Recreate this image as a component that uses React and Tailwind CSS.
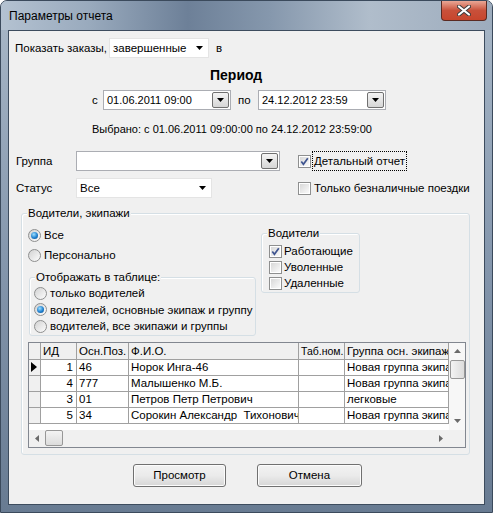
import React from 'react';

const Arrow = () => (
  <svg width="7" height="4" viewBox="0 0 7 4">
    <path d="M0 0h7L3.5 4z" fill="#000" />
  </svg>
);

const DropButton = () => (
  <div className="w-[17px] h-[16px] flex items-center justify-center border border-[#707070] rounded-[2px] bg-gradient-to-b from-[#f4f4f4] to-[#d6d6d6]">
    <Arrow />
  </div>
);

const ListCombo = ({ value, className }) => (
  <div className={`h-[20px] bg-white border border-[#e4e4e4] flex items-center justify-between pl-[3px] pr-[5px] ${className}`}>
    <span>{value}</span>
    <Arrow />
  </div>
);

const EditCombo = ({ value, className }) => (
  <div className={`h-[20px] bg-white border border-[#abadb3] flex items-center justify-between pl-[3px] pr-[1px] text-[11px] ${className}`}>
    <span>{value}</span>
    <DropButton />
  </div>
);

const Check = ({ checked }) => (
  <div className="w-[13px] h-[13px] border border-[#8e8f8f] bg-white p-[1px] shrink-0">
    <div className="w-full h-full bg-gradient-to-br from-[#d8d8d8] to-[#fafafa] flex items-center justify-center">
      {checked && (
        <svg width="9" height="9" viewBox="0 0 9 9">
          <path d="M1.3 4.6L3.4 7.3L7.8 1.2" fill="none" stroke="#3f5590" strokeWidth="1.7" />
        </svg>
      )}
    </div>
  </div>
);

const Radio = ({ checked }) => (
  <div className="w-[13px] h-[13px] rounded-full border border-[#8e8f8f] bg-gradient-to-br from-[#d2d2d2] to-[#fdfdfd] flex items-center justify-center shrink-0">
    {checked && (
      <div className="w-[7px] h-[7px] rounded-full bg-[radial-gradient(circle_at_40%_35%,#9fe0ff,#1f80cf_55%,#0b4a86)]" />
    )}
  </div>
);

const GroupBox = ({ title, className, children }) => (
  <div className={`relative border border-[#d5dfe5] rounded-[3px] shadow-[inset_1px_1px_0_#ffffff] ${className}`}>
    <span className="absolute -top-[8px] left-[5px] px-[1px] bg-[#f0f0f0] leading-[14px]">{title}</span>
    {children}
  </div>
);

const rows = [
  { id: 1, pos: '46', name: 'Норок Инга-46', group: 'Новая группа экипажей', current: true },
  { id: 4, pos: '777', name: 'Малышенко М.Б.', group: 'Новая группа экипажей' },
  { id: 3, pos: '01', name: 'Петров Петр Петрович', group: 'легковые' },
  { id: 5, pos: '34', name: 'Сорокин Александр  Тихонович - 34', group: 'Новая группа экипажей' },
];

const cell = 'h-full border-r border-[#a0a0a0] overflow-hidden whitespace-pre pl-[2px] flex items-center';

const Grid = () => (
  <div className="w-[438px] h-[106px] border border-[#828790] bg-white flex flex-col mt-[6px]">
    <div className="flex h-[87px]">
      <div className="w-[420px] flex flex-col">
        <div className="flex h-[17px] border-b border-[#a0a0a0] bg-[#f0f0f0] shrink-0">
          <div className={`${cell} w-[12px]`} />
          <div className={`${cell} w-[36px]`}>ИД</div>
          <div className={`${cell} w-[52px] pl-[1px]`}>Осн.Поз.</div>
          <div className={`${cell} w-[170px]`}>Ф.И.О.</div>
          <div className={`${cell} w-[46px] pl-[1px] text-[10.5px]`}>Таб.ном.</div>
          <div className={`${cell} w-[104px]`}>Группа осн. экипажа</div>
        </div>
        {rows.map(r => (
          <div key={r.id} className="flex h-[16px] border-b border-[#a0a0a0] shrink-0">
            <div className="h-full w-[12px] border-r border-[#a0a0a0] bg-[#f0f0f0] flex items-center pl-[2px]">
              {r.current && (
                <svg width="6" height="10" viewBox="0 0 6 10">
                  <path d="M0 0L6 5L0 10z" fill="#000" />
                </svg>
              )}
            </div>
            <div className={`${cell} w-[36px] justify-end pr-[3px]`}>{r.id}</div>
            <div className={`${cell} w-[52px]`}>{r.pos}</div>
            <div className={`${cell} w-[170px]`}>{r.name}</div>
            <div className={`${cell} w-[46px]`} />
            <div className={`${cell} w-[104px]`}>{r.group}</div>
          </div>
        ))}
      </div>
      <div className="w-[16px] bg-[#f7f7f7] flex flex-col items-center">
        <div className="h-[17px] flex items-center justify-center">
          <svg width="7" height="4" viewBox="0 0 7 4"><path d="M0 4h7L3.5 0z" fill="#6a6a6a" /></svg>
        </div>
        <div className="w-[15px] h-[19px] rounded-[2px] border border-[#979797] bg-gradient-to-r from-[#f3f3f3] to-[#dcdcdc]" />
        <div className="flex-1" />
        <div className="h-[17px] flex items-center justify-center">
          <svg width="7" height="4" viewBox="0 0 7 4"><path d="M0 0h7L3.5 4z" fill="#6a6a6a" /></svg>
        </div>
      </div>
    </div>
    <div className="flex h-[17px] bg-[#f0f0f0]">
      <div className="w-[420px] flex items-center">
        <div className="w-[16px] flex items-center justify-center">
          <svg width="4" height="7" viewBox="0 0 4 7"><path d="M4 0v7L0 3.5z" fill="#6a6a6a" /></svg>
        </div>
        <div className="w-[18px] h-[16px] rounded-[2px] border border-[#979797] bg-gradient-to-b from-[#f3f3f3] to-[#dcdcdc]" />
        <div className="flex-1" />
        <div className="w-[16px] flex items-center justify-center">
          <svg width="4" height="7" viewBox="0 0 4 7"><path d="M0 0v7L4 3.5z" fill="#6a6a6a" /></svg>
        </div>
      </div>
      <div className="w-[16px] bg-[#f0f0f0]" />
    </div>
  </div>
);

const Button = ({ children, className }) => (
  <button className={`h-[23px] rounded-[3px] border border-[#707070] bg-gradient-to-b from-[#f2f2f2] via-[#ebebeb] to-[#d6d6d6] shadow-[inset_0_0_0_1px_#fcfcfc] text-[11.5px] ${className}`}>
    {children}
  </button>
);

export default function App() {
  return (
    <div className="w-[493px] h-[513px] font-['Liberation_Sans',Arial,sans-serif] text-[11.5px] leading-[16px] text-black whitespace-nowrap">
      <div className="w-full h-full rounded-t-[7px] border border-[#3b4a5c] bg-gradient-to-b from-[#a9b8c8] via-[#8597ad] to-[#687b92] flex flex-col">
        <div className="h-[29px] flex items-start justify-between bg-[linear-gradient(90deg,#b4c2d1_0%,#99aabd_18%,#6d8098_38%,#8698ad_55%,#b0bdcb_75%,#9dacbd_100%)] rounded-t-[6px]">
          <span className="self-center pl-[8px] pt-[1px] text-[12px]">Параметры отчета</span>
          <div className="mr-[5px] w-[46px] h-[20px] rounded-b-[4px] border border-t-0 border-[#5a2a22] bg-gradient-to-b from-[#e9a796] via-[#c8503a] to-[#c7452c] flex items-center justify-center">
            <svg width="14" height="11" viewBox="0 0 14 11">
              <path d="M2 1.5L12 9.5M12 1.5L2 9.5" stroke="#3c3c3c" strokeWidth="4" strokeLinecap="round" />
              <path d="M2 1.5L12 9.5M12 1.5L2 9.5" stroke="#ffffff" strokeWidth="2.2" strokeLinecap="round" />
            </svg>
          </div>
        </div>
        <div className="flex-1 px-[7px] pb-[7px] flex">
          <div className="flex-1 bg-[#f0f0f0] border border-[#3d4c5e] pl-[6px] pt-[7px] flex flex-col">
            <div className="flex items-center h-[20px]">
              <span>Показать заказы,</span>
              <ListCombo value="завершенные" className="w-[100px] ml-[2px]" />
              <span className="ml-[7px]">в</span>
            </div>

            <div className="mt-[9px] h-[16px] ml-[195px] font-bold text-[14px] leading-[16px]">Период</div>

            <div className="mt-[7px] h-[20px] flex items-center ml-[77px]">
              <span className="w-[11px]">с</span>
              <EditCombo value="01.06.2011 09:00" className="w-[128px]" />
              <span className="ml-[7px] w-[20px]">по</span>
              <EditCombo value="24.12.2012 23:59" className="w-[128px]" />
            </div>

            <div className="mt-[12px] h-[14px] leading-[14px] ml-[77px] text-[11px]">
              Выбрано: с 01.06.2011 09:00:00 по 24.12.2012 23:59:00
            </div>

            <div className="mt-[15px] h-[20px] flex items-center">
              <span className="ml-[1px] w-[60px]">Группа</span>
              <EditCombo value="" className="w-[204px]" />
              <div className="ml-[18px] flex items-center">
                <Check checked />
                <span className="ml-[1px] border border-dotted border-black px-[1px] leading-[18px]">Детальный отчет</span>
              </div>
            </div>

            <div className="mt-[7px] h-[20px] flex items-center">
              <span className="ml-[1px] w-[60px]">Статус</span>
              <ListCombo value="Все" className="w-[136px]" />
              <div className="ml-[86px] flex items-center">
                <Check />
                <span className="ml-[3px]">Только безналичные поездки</span>
              </div>
            </div>

            <GroupBox title="Водители, экипажи" className="mt-[15px] ml-[6px] w-[449px] pt-[13px] pl-[6px] pb-[6px]">
              <div className="flex">
                <div className="w-[228px] flex flex-col">
                  <div className="h-[16px] flex items-center">
                    <Radio checked />
                    <span className="ml-[3px]">Все</span>
                  </div>
                  <div className="h-[16px] mt-[4px] flex items-center">
                    <Radio />
                    <span className="ml-[3px]">Персонально</span>
                  </div>
                  <GroupBox title="Отображать в таблице:" className="mt-[14px] ml-[1px] w-[227px] pt-[7px] pl-[4px]">
                    {[
                      ['только водителей', false],
                      ['водителей, основные экипаж и группу', true],
                      ['водителей, все экипажи и группы', false],
                    ].map(([label, on]) => (
                      <div key={label} className="h-[16.5px] flex items-center">
                        <Radio checked={on} />
                        <span className="ml-[3px]">{label}</span>
                      </div>
                    ))}
                  </GroupBox>
                </div>
                <GroupBox title="Водители" className="ml-[5px] mt-[6px] w-[99px] h-[60px] pt-[9px] pl-[7px]">
                  {[
                    ['Работающие', true],
                    ['Уволенные', false],
                    ['Удаленные', false],
                  ].map(([label, on]) => (
                    <div key={label} className="h-[16px] flex items-center">
                      <Check checked={on} />
                      <span className="ml-[2px]">{label}</span>
                    </div>
                  ))}
                </GroupBox>
              </div>
              <Grid />
            </GroupBox>

            <div className="mt-[9px] flex">
              <Button className="ml-[118px] w-[93px]">Просмотр</Button>
              <Button className="ml-[31px] w-[105px]">Отмена</Button>
            </div>
          </div>
        </div>
      </div>
    </div>
  );
}
